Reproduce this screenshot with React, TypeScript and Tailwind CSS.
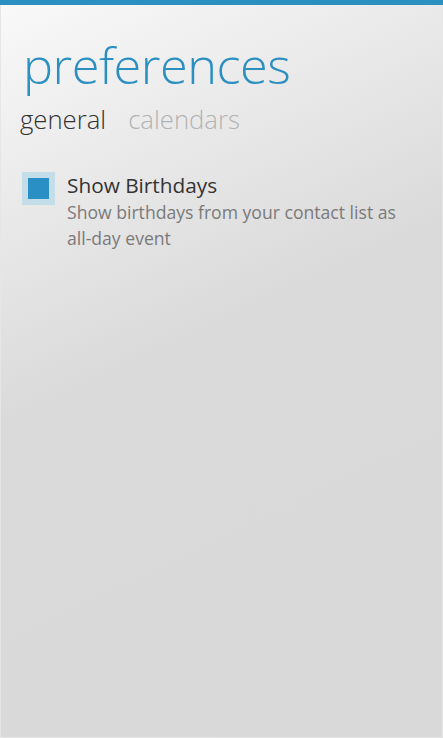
export default function App() {
  return (
    <div
      className="flex h-[738px] w-[443px] flex-col overflow-hidden bg-linear-[155deg] from-[#f9f9f9] via-[#dadada] via-45% to-[#d9d9d9]"
      style={{ fontFamily: '"Open Sans", "Noto Sans", sans-serif' }}
    >
      {/* Accent bar */}
      <div className="h-[5px] w-full bg-[#2b8fc2]" />

      <div className="flex flex-1 flex-col border-x border-b border-[#e6e6e6]">
        {/* Title */}
        <h1 className="mt-[27px] pl-[22px] text-[50.5px] font-light leading-[66px] tracking-[-0.5px] text-[#2b8fc2]">
          preferences
        </h1>

        {/* Pivot headers */}
        <div className="mt-[5px] flex gap-[22px] pl-[19px] text-[25.7px] font-light leading-[34px]">
          <span className="text-[#333333]">general</span>
          <span className="text-[#b3b3b3]">calendars</span>
        </div>

        {/* Setting row */}
        <div className="mt-[34px] flex gap-[12px] pl-[21px]">
          <div className="mt-[1px] flex h-[33px] w-[33px] shrink-0 items-center justify-center bg-[#c3dde9]">
            <div className="h-[21px] w-[21px] bg-[#2a8fc4]" />
          </div>
          <div className="flex flex-col">
            <span className="text-[20.8px] leading-[28px] text-[#333333]">Show Birthdays</span>
            <span className="w-[350px] text-[17.6px] leading-[26px] text-[#7a7a7a]">
              Show birthdays from your contact list as{' '}
              <span className="whitespace-nowrap">all-day</span> event
            </span>
          </div>
        </div>
      </div>
    </div>
  );
}
